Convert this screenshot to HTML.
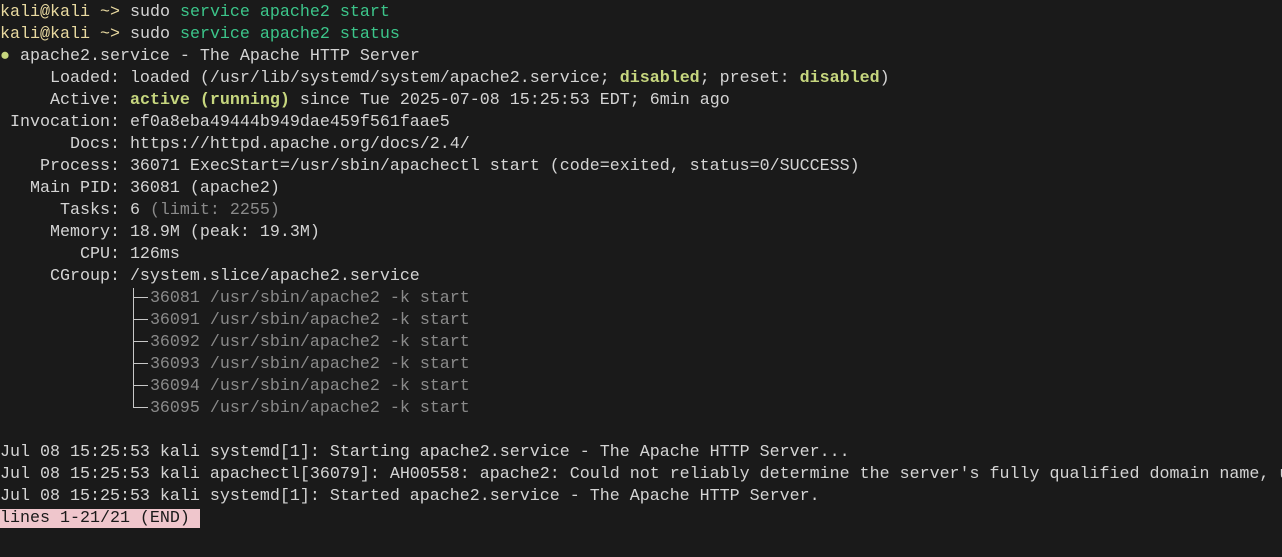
<!DOCTYPE html>
<html><head><style>
html,body{margin:0;background:#1a1a1a;width:1282px;height:557px;overflow:hidden;position:relative}
pre{margin:0;padding-top:2px;font-family:"Liberation Mono","DejaVu Sans Mono",monospace;font-size:16.67px;line-height:22px;color:#d4d4d4;white-space:pre}
.u{color:#e8d9a0}.g{color:#3cc58a}.b{color:#c6d67e;font-weight:bold}.gr{color:#8a8a8a}
.end{background:#efc6cc;color:#1a1a1a}
.v{position:absolute;left:133px;top:288px;width:1px;height:120px;background:#c8c8c8}
.h{position:absolute;left:133px;width:15px;height:1px;background:#c8c8c8}
</style></head><body><pre><span class="u">kali@kali</span> <span class="u">~&gt;</span> sudo <span class="g">service apache2 start</span>
<span class="u">kali@kali</span> <span class="u">~&gt;</span> sudo <span class="g">service apache2 status</span>
<span style="color:#c6d67e">●</span> apache2.service - The Apache HTTP Server
     Loaded: loaded (/usr/lib/systemd/system/apache2.service; <span class="b">disabled</span>; preset: <span class="b">disabled</span>)
     Active: <span class="b">active (running)</span> since Tue 2025-07-08 15:25:53 EDT; 6min ago
 Invocation: ef0a8eba49444b949dae459f561faae5
       Docs: https://httpd.apache.org/docs/2.4/
    Process: 36071 ExecStart=/usr/sbin/apachectl start (code=exited, status=0/SUCCESS)
   Main PID: 36081 (apache2)
      Tasks: 6 <span class="gr">(limit: 2255)</span>
     Memory: 18.9M (peak: 19.3M)
        CPU: 126ms
     CGroup: /system.slice/apache2.service
               <span class="gr">36081 /usr/sbin/apache2 -k start</span>
               <span class="gr">36091 /usr/sbin/apache2 -k start</span>
               <span class="gr">36092 /usr/sbin/apache2 -k start</span>
               <span class="gr">36093 /usr/sbin/apache2 -k start</span>
               <span class="gr">36094 /usr/sbin/apache2 -k start</span>
               <span class="gr">36095 /usr/sbin/apache2 -k start</span>

Jul 08 15:25:53 kali systemd[1]: Starting apache2.service - The Apache HTTP Server...
Jul 08 15:25:53 kali apachectl[36079]: AH00558: apache2: Could not reliably determine the server's fully qualified domain name, u
Jul 08 15:25:53 kali systemd[1]: Started apache2.service - The Apache HTTP Server.
<span class="end">lines 1-21/21 (END) </span></pre>
<div class="v"></div>
<div class="h" style="top:297px"></div>
<div class="h" style="top:319px"></div>
<div class="h" style="top:341px"></div>
<div class="h" style="top:363px"></div>
<div class="h" style="top:385px"></div>
<div class="h" style="top:407px"></div>
</body></html>
